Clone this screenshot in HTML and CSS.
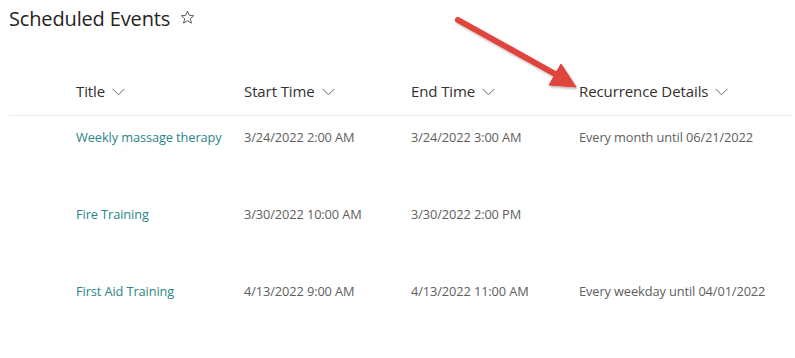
FILE: index.html
```html
<!DOCTYPE html>
<html>
<head>
<meta charset="utf-8">
<link rel="stylesheet" href="styles.css">
</head>
<body>
<div class="page">
  <div class="titlebar">
    <h1 class="title">Scheduled Events</h1>
    <svg class="star" width="15" height="15" viewBox="0 0 16 16"><path d="M8 1.2 L9.9 5.7 L14.7 6.1 L11 9.2 L12.2 14 L8 11.4 L3.8 14 L5 9.2 L1.3 6.1 L6.1 5.7 Z" fill="none" stroke="#555" stroke-width="1" stroke-linejoin="round"/></svg>
  </div>
  <div class="list">
    <div class="row head">
      <div></div>
      <div class="hcell">Title <svg class="chev" width="13" height="8" viewBox="0 0 13 8"><path d="M0.5 0.8 L6.5 6.8 L12.5 0.8" fill="none" stroke="#666" stroke-width="1"/></svg></div>
      <div class="hcell">Start Time <svg class="chev" width="13" height="8" viewBox="0 0 13 8"><path d="M0.5 0.8 L6.5 6.8 L12.5 0.8" fill="none" stroke="#666" stroke-width="1"/></svg></div>
      <div class="hcell">End Time <svg class="chev" width="13" height="8" viewBox="0 0 13 8"><path d="M0.5 0.8 L6.5 6.8 L12.5 0.8" fill="none" stroke="#666" stroke-width="1"/></svg></div>
      <div class="hcell">Recurrence Details <svg class="chev" width="13" height="8" viewBox="0 0 13 8"><path d="M0.5 0.8 L6.5 6.8 L12.5 0.8" fill="none" stroke="#666" stroke-width="1"/></svg></div>
    </div>
    <div class="row item">
      <div></div>
      <div class="cell link">Weekly massage therapy</div>
      <div class="cell">3/24/2022 2:00 AM</div>
      <div class="cell">3/24/2022 3:00 AM</div>
      <div class="cell">Every month until 06/21/2022</div>
    </div>
    <div class="row item">
      <div></div>
      <div class="cell link">Fire Training</div>
      <div class="cell">3/30/2022 10:00 AM</div>
      <div class="cell">3/30/2022 2:00 PM</div>
      <div class="cell"></div>
    </div>
    <div class="row item">
      <div></div>
      <div class="cell link">First Aid Training</div>
      <div class="cell">4/13/2022 9:00 AM</div>
      <div class="cell">4/13/2022 11:00 AM</div>
      <div class="cell">Every weekday until 04/01/2022</div>
    </div>
  </div>
  <svg class="arrow" width="795" height="358" viewBox="0 0 795 358">
    <defs>
      <filter id="sh" x="-10%" y="-10%" width="130%" height="130%">
        <feDropShadow dx="1" dy="1.5" stdDeviation="1.2" flood-color="#000" flood-opacity="0.3"/>
      </filter>
    </defs>
    <g filter="url(#sh)" fill="#e0443e" stroke="#e0443e">
      <line x1="458" y1="20" x2="557" y2="75" stroke-width="6" stroke-linecap="round"/>
      <polygon points="576,87 549,85 561,64" stroke-width="1" stroke-linejoin="round"/>
    </g>
  </svg>
</div>
</body>
</html>
```

FILE: styles.css
```css
html, body {
  margin: 0;
  padding: 0;
  background: #ffffff;
}
body {
  font-family: "Open Sans", "Noto Sans", sans-serif;
  color: #323130;
}
.page {
  position: relative;
  width: 795px;
  height: 358px;
  overflow: hidden;
}
.titlebar {
  display: flex;
  align-items: center;
  gap: 10px;
  height: 36px;
  padding-left: 9px;
}
.title {
  margin: 0;
  font-size: 20px;
  font-weight: 400;
  color: #252423;
  letter-spacing: -0.15px;
}
.star {
  margin-top: -1px;
}
.list {
  margin-top: 31px;
  margin-left: 9px;
  width: 784px;
}
.row {
  display: grid;
  grid-template-columns: 67px 168px 167px 168px 1fr;
}
.head {
  height: 48px;
  align-items: center;
  border-bottom: 1px solid #edebe9;
}
.hcell {
  display: flex;
  align-items: center;
  gap: 7px;
  font-size: 15px;
  color: #323130;
  letter-spacing: -0.1px;
}
.chev {
  margin-top: 1px;
}
.item {
  height: 77px;
}
.cell {
  padding-top: 11px;
  line-height: 20px;
  font-size: 12.8px;
  color: #605e5c;
  letter-spacing: -0.1px;
}
.cell.link {
  color: #2b8587;
}
.arrow {
  position: absolute;
  left: 0;
  top: 0;
  pointer-events: none;
}
```
